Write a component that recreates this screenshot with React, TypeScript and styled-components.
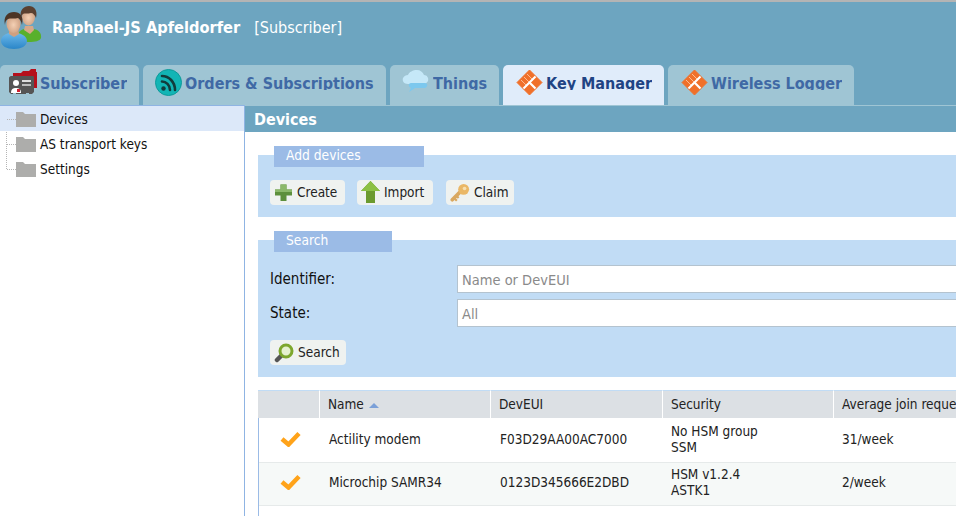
import React from 'react';
import styled, { createGlobalStyle } from 'styled-components';

const BODY_FONT = '"DejaVu Sans Condensed", "Noto Sans", "Liberation Sans", sans-serif';

const GlobalStyle = createGlobalStyle`
  html, body { margin: 0; padding: 0; height: 100%; overflow: hidden; background: #fff; }
  body { font-family: ${BODY_FONT}; color: #1a1a1a; }
  #root { height: 100%; }
`;

const Page = styled.div`
  width: 956px;
  height: 516px;
  display: flex;
  flex-direction: column;
  overflow: hidden;
  font-family: ${BODY_FONT};
  font-size: 13.5px;
`;

const Header = styled.header`
  height: 105px;
  flex-shrink: 0;
  background: #6da5c0;
  border-top: 2px solid #b4b4b4;
  box-sizing: border-box;
  display: flex;
  flex-direction: column;
  justify-content: space-between;
`;

const UserRow = styled.div`
  display: flex;
  align-items: center;
  height: 48px;
  color: #fff;
`;

const UserName = styled.span`
  font-weight: 700;
  font-size: 16.25px;
  margin-left: 10px;
  margin-top: 2px;
`;

const UserRole = styled.span`
  font-size: 16px;
  margin-left: 14px;
  margin-top: 2px;
`;

const TabBar = styled.nav`
  display: flex;
  gap: 4px;
  height: 40px;
  border-bottom: 1px solid #9fc5d4;
  box-sizing: content-box;
  margin-bottom: -1px;
`;

const Tab = styled.div<{ $active?: boolean; $width: number; $pad: number; $gap: number }>`
  width: ${p => p.$width}px;
  height: 40px;
  box-sizing: border-box;
  display: flex;
  align-items: flex-start;
  padding: 4px 0 0 ${p => p.$pad}px;
  gap: ${p => p.$gap}px;
  border-radius: 5px 5px 0 0;
  background: ${p => (p.$active ? '#e0ecfa' : '#9fc5d4')};
  color: ${p => (p.$active ? '#1f4484' : '#3f69a5')};
  overflow: hidden;
`;

const TabLabel = styled.span`
  font-weight: 700;
  font-size: 16px;
  line-height: 26px;
  height: 19px;
  margin-top: 2px;
  overflow: hidden;
  white-space: nowrap;
`;

const Body = styled.div`
  flex: 1;
  display: flex;
  min-height: 0;
`;

const Sidebar = styled.aside`
  width: 245px;
  flex-shrink: 0;
  box-sizing: border-box;
  border-right: 1px solid #8fb4e3;
  border-top: 1px solid #8fb4e3;
  position: relative;
`;

const TreeLine = styled.div`
  position: absolute;
  left: 6px;
  top: 0;
  height: 63px;
  border-left: 1px dotted #b5b5b5;
`;

const TreeRow = styled.div<{ $selected?: boolean }>`
  height: 25px;
  display: flex;
  align-items: center;
  padding-left: 16px;
  gap: 4px;
  background: ${p => (p.$selected ? '#dce8f9' : 'transparent')};
  position: relative;
  color: #111;
  &::before {
    content: '';
    position: absolute;
    left: 7px;
    top: 13px;
    width: 9px;
    border-top: 1px dotted #b5b5b5;
  }
`;

const Main = styled.main`
  flex: 1;
  min-width: 0;
  display: flex;
  flex-direction: column;
  padding-top: 1px;
`;

const Title = styled.div`
  height: 26px;
  flex-shrink: 0;
  background: #6da5c0;
  color: #fff;
  font-weight: 700;
  font-size: 16px;
  line-height: 27px;
  padding-left: 9px;
`;

const Content = styled.div`
  padding: 23px 0 0 13px;
  display: flex;
  flex-direction: column;
  gap: 23px;
`;

const Panel = styled.section<{ $height: number }>`
  height: ${p => p.$height}px;
  box-sizing: border-box;
  background: #c1dcf5;
  padding: 25px 12px 0;
  position: relative;
`;

const Legend = styled.div<{ $width: number }>`
  position: absolute;
  left: 16px;
  top: -9px;
  width: ${p => p.$width}px;
  height: 21px;
  box-sizing: border-box;
  background: #9bbbe6;
  color: #fff;
  font-size: 13.7px;
  line-height: 18px;
  padding-left: 12px;
`;

const ButtonRow = styled.div`
  display: flex;
  gap: 12px;
`;

const Button = styled.div<{ $width: number; $offset?: number }>`
  width: ${p => p.$width}px;
  height: 25px;
  margin-left: ${p => p.$offset ?? 0}px;
  box-sizing: border-box;
  background: #eff2f0;
  border-radius: 4px;
  display: flex;
  align-items: center;
  padding-left: 4px;
  gap: 4px;
  color: #222;
`;

const ButtonLabel = styled.span`
  margin-top: -2px;
`;

const FormRow = styled.div`
  display: grid;
  grid-template-columns: 187px 1fr;
  align-items: center;
  height: 28px;
  margin-bottom: 6px;
  font-size: 14.5px;
  color: #111;
`;

const FormLabel = styled.span`
  font-size: 15px;
`;

const SearchActions = styled.div`
  margin-top: 13px;
`;

const FormField = styled.div`
  height: 28px;
  box-sizing: border-box;
  background: #fff;
  border: 1px solid #b4c3cf;
  border-right: none;
  margin-right: -12px;
  padding-left: 4px;
  line-height: 28px;
  color: #8a8a8a;
`;

const Table = styled.div`
  display: grid;
  grid-template-columns: 61px 171px 172px 171px 1fr;
  grid-template-rows: 29px 44px 43px;
  min-height: 126px;
  margin-top: -10px;
  position: relative;
  &::before {
    content: '';
    position: absolute;
    left: 0;
    top: 28px;
    bottom: 0;
    width: 1px;
    background: #9bbbe6;
  }
`;

const HeadCell = styled.div`
  height: 28px;
  box-sizing: border-box;
  background: #dce0e4;
  border-left: 1px solid #fff;
  border-top: 1px solid #c1dcf5;
  padding-left: 8px;
  line-height: 26px;
  white-space: nowrap;
  overflow: hidden;
  color: #222;
  &:first-child { border-left: none; }
`;

const Cell = styled.div<{ $alt?: boolean; $pad: number }>`
  box-sizing: border-box;
  background: ${p => (p.$alt ? '#f6f9f8' : '#fff')};
  border-bottom: 1px solid #e6eaea;
  display: flex;
  align-items: center;
  padding: 0 0 ${p => (p.$alt ? 5 : 3)}px ${p => p.$pad}px;
  line-height: 16px;
  color: #222;
  white-space: nowrap;
`;

const SortArrow = styled.span`
  display: inline-block;
  margin-left: 5px;
  vertical-align: 1px;
  border-left: 5px solid transparent;
  border-right: 5px solid transparent;
  border-bottom: 5px solid #7ba0d8;
`;

const People = () => (
  <svg width="42" height="46" viewBox="0 0 42 46">
    <defs>
      <radialGradient id="skin" cx="0.5" cy="0.55" r="0.6">
        <stop offset="0" stopColor="#f4d0b4" />
        <stop offset="1" stopColor="#c99a7c" />
      </radialGradient>
      <linearGradient id="blueShirt" x1="0" y1="0" x2="0" y2="1">
        <stop offset="0" stopColor="#6cb8ea" />
        <stop offset="1" stopColor="#2a86c8" />
      </linearGradient>
    </defs>
    <path d="M18 33c0-5 5-8 10-7l2 2 3-2c5 0 9 4 8 9-1 3-6 4-12 4-6 0-10-2-11-6z" fill="#58b02c" />
    <path d="M24 27l6 4 4-4-1-4h-8z" fill="#d8a888" />
    <ellipse cx="28.500" cy="14" rx="6.500" ry="8.500" fill="url(#skin)" />
    <path d="M21 15c-2-8 3-12 8-12 5 0 9 4 7 12-1-3-3-5-5-5-3 1-7 0-8 1-1 1-2 2-2 4z" fill="#5a4030" />
    <path d="M1 38c0-5 6-9 12-8 5-1 14 2 14 8 0 5-6 8-13 8-7 0-13-3-13-8z" fill="url(#blueShirt)" />
    <path d="M9 26h9l1 5-5 3-5-3z" fill="#d0a080" />
    <ellipse cx="13.500" cy="21" rx="7" ry="9" fill="url(#skin)" />
    <path d="M5 22c-2-9 3-13 9-13 6 0 10 4 8 13-1-4-2-6-4-7-3 1-8 0-10 1-2 1-3 3-3 6z" fill="#4c3526" />
  </svg>
);

const CardIcon = () => (
  <svg width="30" height="27" viewBox="0 0 30 27">
    <path d="M4 4h8l2-2h6l2-2h5v3h1v16H4z" fill="#b5101c" />
    <path d="M0 9c0-1 1-2 2-2h22c1 0 1 1 1 2v14l-2 2h-3v-1h-3v1H7v-1H4v1H2l-2-2z" fill="#555" />
    <rect x="13" y="11" width="9" height="2" fill="#ddd" />
    <rect x="13" y="15" width="9" height="2" fill="#bbb" />
    <circle cx="7" cy="14" r="3" fill="#fff" />
    <path d="M2 24c0-4 2-5 5-5s5 1 5 5z" fill="#fff" />
    <rect x="8" y="20" width="3" height="3" fill="#d02030" />
  </svg>
);

const FeedIcon = () => (
  <svg width="27" height="27" viewBox="0 0 27 27">
    <circle cx="13.500" cy="13.500" r="13" fill="#12b5b5" stroke="#0d9a9a" />
    <g fill="none" stroke="#123c3c" strokeWidth="2.600" strokeLinecap="round">
      <path d="M7 12.500c4 0 8 3.500 8 8.500" />
      <path d="M7 7c7 0 13 6 13 14" />
    </g>
    <circle cx="8.500" cy="19.500" r="2.200" fill="#123c3c" />
  </svg>
);

const CloudIcon = () => (
  <svg width="28" height="25" viewBox="0 0 28 25">
    <path d="M6 15c-4 0-6-3-5-6 1-2 3-3 5-3 1-3 5-5 9-5 3 0 6 2 7 5 3 0 5 3 4 6-1 2-3 3-5 3H8z" fill="#c5e8f8" />
    <path d="M9 14h14c3 0 3 4 0 5H13l-6 4 2-4c-3-1-3-5 0-5z" fill="#7cc8ee" />
  </svg>
);

const DiamondIcon = () => (
  <svg width="27" height="27" viewBox="0 0 27 27">
    <path d="M13.500 1l12.500 12.500-12.500 12.500L1 13.500z" fill="#f0702a" stroke="#f0702a" strokeLinejoin="round" />
    <g stroke="#ffc49c" strokeWidth="0.900" fill="none">
      <path d="M5 11l5 5M8 8l5 5M11 5l5 5" />
    </g>
    <g stroke="#fff" fill="none" strokeWidth="2.200">
      <path d="M7.500 19.500L19.500 7.500" />
      <path d="M13.500 13.500l6 6" />
    </g>
  </svg>
);

const Folder = () => (
  <svg width="20" height="16" viewBox="0 0 20 16">
    <path d="M0 1h7l2 2h11v13H0z" fill="#adadab" />
  </svg>
);

const PlusIcon = () => (
  <svg width="19" height="19" viewBox="0 0 19 19">
    <path d="M6.500 1.500h6v5h5.500v6h-5.500v5.500h-6V12.500H1v-6h5.500z" fill="#5d8f3c" />
    <path d="M6.500 1.500h6v5h5.500v2.500H1V6.500h5.500z" fill="#8bb86a" />
  </svg>
);

const ArrowUpIcon = () => (
  <svg width="19" height="23" viewBox="0 0 19 23">
    <path d="M9.500 0L19 10h-5v12H5V10H0z" fill="#6b9a2e" />
    <path d="M9.500 0L19 10H0z" fill="#8cc044" />
  </svg>
);

const KeyIcon = () => (
  <svg width="20" height="20" viewBox="0 0 22 22">
    <path d="M2.500 18.500l9-9" stroke="#d9a860" strokeWidth="4" strokeLinecap="round" />
    <path d="M5 17l2.500 2.500M7.500 14.500l2 2" stroke="#d9a860" strokeWidth="2.500" />
    <circle cx="15" cy="7" r="6" fill="#eab766" />
    <circle cx="16" cy="6" r="2" fill="#f7e0b0" />
  </svg>
);

const SearchIcon = () => (
  <svg width="20" height="20" viewBox="0 0 20 20">
    <path d="M3 17l5-5" stroke="#555" strokeWidth="4.500" strokeLinecap="round" />
    <circle cx="12" cy="8" r="6" fill="#e6f2d0" stroke="#7da72e" strokeWidth="3" />
  </svg>
);

const Check = () => (
  <svg width="21" height="16" viewBox="0 0 21 16">
    <path d="M2 8l6.500 5.500L19 2.500" fill="none" stroke="#ffa31a" strokeWidth="4.500" />
  </svg>
);

const tabs = [
  { label: 'Subscriber', width: 139, pad: 9, gap: 1, icon: <CardIcon /> },
  { label: 'Orders & Subscriptions', width: 243, pad: 12, gap: 3, icon: <FeedIcon /> },
  { label: 'Things', width: 109, pad: 12, gap: 3, icon: <CloudIcon /> },
  { label: 'Key Manager', width: 161, pad: 13, gap: 3, icon: <DiamondIcon />, active: true },
  { label: 'Wireless Logger', width: 186, pad: 13, gap: 3, icon: <DiamondIcon /> },
];

const devices = [
  { name: 'Actility modem', eui: 'F03D29AA00AC7000', sec: ['No HSM group', 'SSM'], rate: '31/week' },
  { name: 'Microchip SAMR34', eui: '0123D345666E2DBD', sec: ['HSM v1.2.4', 'ASTK1'], rate: '2/week', alt: true },
];

export default function App() {
  return (
    <Page>
      <GlobalStyle />
      <Header>
        <UserRow>
          <People />
          <UserName>Raphael-JS Apfeldorfer</UserName>
          <UserRole>[Subscriber]</UserRole>
        </UserRow>
        <TabBar>
          {tabs.map(t => (
            <Tab key={t.label} $width={t.width} $pad={t.pad} $gap={t.gap} $active={t.active}>
              {t.icon}
              <TabLabel>{t.label}</TabLabel>
            </Tab>
          ))}
        </TabBar>
      </Header>
      <Body>
        <Sidebar>
          <TreeLine />
          <TreeRow $selected><Folder />Devices</TreeRow>
          <TreeRow><Folder />AS transport keys</TreeRow>
          <TreeRow><Folder />Settings</TreeRow>
        </Sidebar>
        <Main>
          <Title>Devices</Title>
          <Content>
            <Panel $height={62}>
              <Legend $width={150}>Add devices</Legend>
              <ButtonRow>
                <Button $width={75}><PlusIcon /><ButtonLabel>Create</ButtonLabel></Button>
                <Button $width={76}><ArrowUpIcon /><ButtonLabel>Import</ButtonLabel></Button>
                <Button $width={68} $offset={1}><KeyIcon /><ButtonLabel>Claim</ButtonLabel></Button>
              </ButtonRow>
            </Panel>
            <Panel $height={137}>
              <Legend $width={118}>Search</Legend>
              <FormRow><FormLabel>Identifier:</FormLabel><FormField>Name or DevEUI</FormField></FormRow>
              <FormRow><FormLabel>State:</FormLabel><FormField>All</FormField></FormRow>
              <SearchActions>
                <Button $width={76}><SearchIcon /><ButtonLabel>Search</ButtonLabel></Button>
              </SearchActions>
            </Panel>
            <Table>
              <HeadCell />
              <HeadCell>Name<SortArrow /></HeadCell>
              <HeadCell>DevEUI</HeadCell>
              <HeadCell>Security</HeadCell>
              <HeadCell>Average join requests</HeadCell>
              {devices.map(d => (
                <React.Fragment key={d.eui}>
                  <Cell $alt={d.alt} $pad={22}><Check /></Cell>
                  <Cell $alt={d.alt} $pad={10}>{d.name}</Cell>
                  <Cell $alt={d.alt} $pad={10}>{d.eui}</Cell>
                  <Cell $alt={d.alt} $pad={9}><div>{d.sec[0]}<br />{d.sec[1]}</div></Cell>
                  <Cell $alt={d.alt} $pad={9}>{d.rate}</Cell>
                </React.Fragment>
              ))}
            </Table>
          </Content>
        </Main>
      </Body>
    </Page>
  );
}
